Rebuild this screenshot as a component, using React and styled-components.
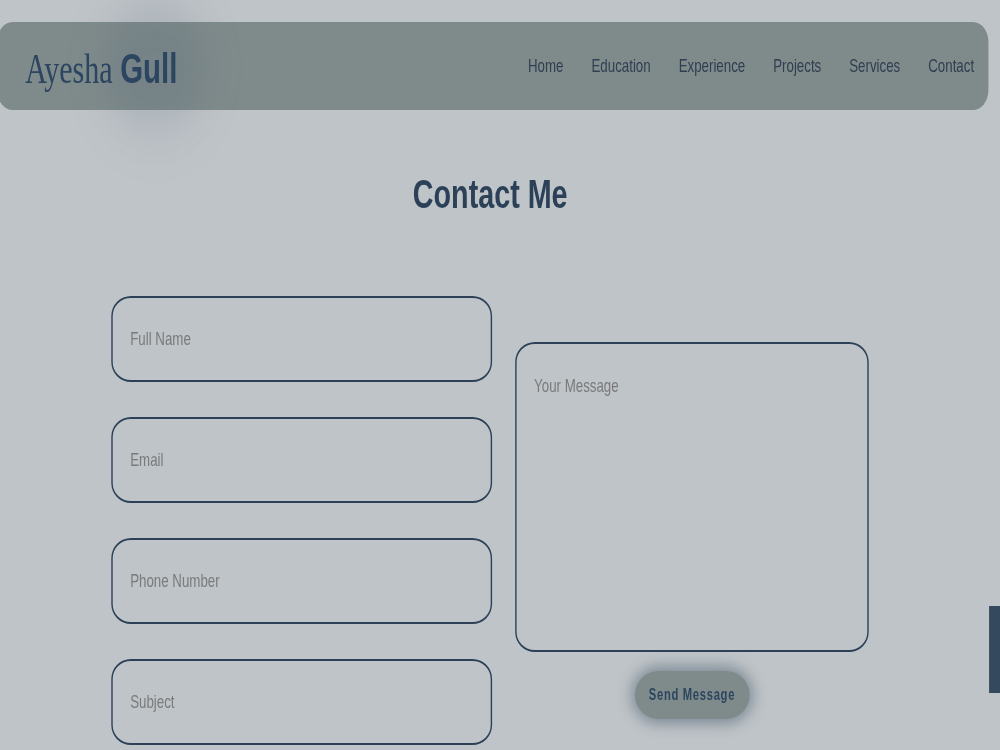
import React from "react";
import styled, { createGlobalStyle } from "styled-components";

// the reference is squeezed sideways, so the page is laid out wider and scaled on X
const SQUEEZE = 0.7;

const GlobalStyle = createGlobalStyle`
  html, body {
    margin: 0;
    padding: 0;
    background: #bfc4c8;
    overflow: hidden;
  }
  body {
    font-family: "Liberation Sans", Arial, sans-serif;
  }
`;

const Page = styled.div`
  position: relative;
  width: ${1000 / SQUEEZE}px;
  height: 750px;
  overflow: hidden;
  background: #bfc4c8;
  transform: scaleX(${SQUEEZE});
  transform-origin: 0 0;
`;

const Header = styled.header`
  position: relative;
  display: flex;
  align-items: center;
  justify-content: space-between;
  height: 88px;
  margin: 22px 17px 0 -4px;
  padding: 0 20px 0 40px;
  background: #7f8b8b;
  border-radius: 22px / 20px;
`;

const Glow = styled.div`
  position: absolute;
  left: 150px;
  top: -20px;
  width: 150px;
  height: 130px;
  border-radius: 50%;
  background: rgba(70, 88, 112, 0.16);
  filter: blur(26px);
  pointer-events: none;
`;

const Logo = styled.div`
  position: relative;
  font-family: "Liberation Serif", "Times New Roman", serif;
  font-size: 43px;
  color: #2c4560;
  margin-top: 4px;
`;

const LogoBold = styled.span`
  font-family: "Liberation Sans", Arial, sans-serif;
  font-weight: bold;
  font-size: 42px;
`;

const Nav = styled.nav`
  display: flex;
  gap: 40px;
  margin-top: 0;
`;

const NavLink = styled.a`
  font-size: 19px;
  color: #2f3e50;
  text-decoration: none;
`;

const Title = styled.h1`
  margin: 61px 0 0;
  text-align: center;
  padding-right: 28px;
  font-size: 41px;
  font-weight: bold;
  color: #2c4158;
`;

const Form = styled.form`
  display: flex;
  gap: 33px;
  margin: 78px 0 0 159px;
`;

const Column = styled.div`
  display: flex;
  flex-direction: column;
  gap: 35px;
`;

const Field = styled.input`
  box-sizing: border-box;
  width: 544px;
  height: 86px;
  padding: 0 25px;
  border: 2px solid #2c4158;
  border-radius: 28px / 20px;
  background: transparent;
  font-family: inherit;
  font-size: 19px;
  color: #2c4158;
  outline: none;
  &::placeholder {
    color: #7a7a7a;
  }
`;

const MessageColumn = styled.div`
  display: flex;
  flex-direction: column;
  align-items: center;
  padding-top: 46px;
`;

const Message = styled.textarea`
  box-sizing: border-box;
  width: 505px;
  height: 310px;
  padding: 31px 25px;
  border: 2px solid #2c4158;
  border-radius: 28px / 20px;
  background: transparent;
  font-family: inherit;
  font-size: 19px;
  color: #2c4158;
  resize: none;
  outline: none;
  &::placeholder {
    color: #7a7a7a;
  }
`;

const SendButton = styled.button`
  margin-top: 19px;
  width: 164px;
  height: 48px;
  border: none;
  border-radius: 34px / 24px;
  background: #7f8b8b;
  box-shadow: 0 0 16px 5px rgba(52, 73, 94, 0.45);
  font-family: inherit;
  font-weight: bold;
  font-size: 16px;
  letter-spacing: 1px;
  color: #2c4560;
  cursor: pointer;
`;

const SideTab = styled.div`
  position: absolute;
  right: 0;
  top: 606px;
  width: 16px;
  height: 87px;
  background: #34495e;
`;

export default function App() {
  const links = ["Home", "Education", "Experience", "Projects", "Services", "Contact"];
  return (
    <Page>
      <GlobalStyle />
      <Header>
        <Glow />
        <Logo>
          Ayesha <LogoBold>Gull</LogoBold>
        </Logo>
        <Nav>
          {links.map((l) => (
            <NavLink key={l} href={`#${l.toLowerCase()}`}>
              {l}
            </NavLink>
          ))}
        </Nav>
      </Header>
      <Title>Contact Me</Title>
      <Form onSubmit={(e) => e.preventDefault()}>
        <Column>
          <Field placeholder="Full Name" />
          <Field placeholder="Email" />
          <Field placeholder="Phone Number" />
          <Field placeholder="Subject" />
        </Column>
        <MessageColumn>
          <Message placeholder="Your Message" />
          <SendButton type="submit">Send Message</SendButton>
        </MessageColumn>
      </Form>
      <SideTab />
    </Page>
  );
}
